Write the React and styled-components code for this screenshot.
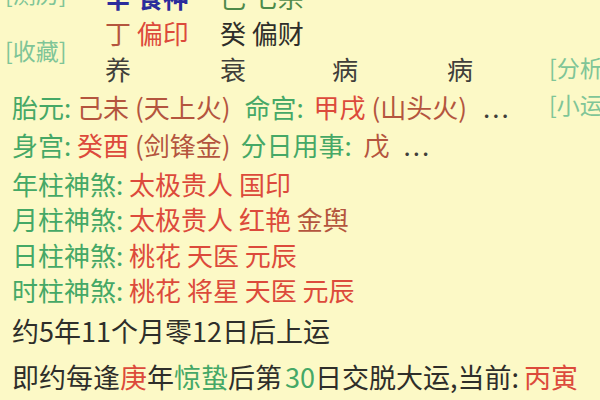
import React from "react";
import styled, { createGlobalStyle } from "styled-components";

const Global = createGlobalStyle`
  html, body { margin: 0; padding: 0; background: #fcf9c6; }
  body {
    width: 600px; height: 400px; overflow: hidden;
    font-family: "Noto Sans CJK SC", "Noto Sans", sans-serif;
  }
`;

const C = {
  green: "#45a866",
  light: "#7fc597",
  red: "#dc4a3b",
  brown: "#b4553e",
  dark: "#2e2e2a",
  grey: "#403f3a",
  blue: "#2b2c9c",
  olive: "#4e8a4a",
};

const Page = styled.div`
  position: relative;
  width: 600px;
  height: 400px;
  overflow: hidden;
  background: #fcf9c6;
  color: ${C.dark};
`;

const Top = styled.div`
  display: flex;
  margin-top: -21px;
`;

const SideLabels = styled.div`
  width: 105px;
  padding-left: 5px;
  box-sizing: border-box;
  display: flex;
  flex-direction: column;
  gap: 27px;
  margin-top: -1px;
`;

const Label = styled.div`
  font-size: 23px;
  line-height: 30px;
  color: ${C.light};
  white-space: nowrap;
`;

const Table = styled.div`
  display: grid;
  grid-template-columns: 115px 112px 115px 115px;
  grid-auto-rows: 36px;
  font-size: 26px;
  line-height: 36px;
  white-space: nowrap;
`;

const Cell = styled.div`
  color: ${(p) => p.$c || C.grey};
  font-weight: ${(p) => (p.$bold ? 700 : 400)};
`;

const Lines = styled.div`
  padding-left: 12px;
`;

const Line = styled.div`
  font-size: ${(p) => p.$size || 26}px;
  line-height: ${(p) => p.$lh || 36}px;
  margin-top: ${(p) => p.$gap || 0}px;
  white-space: nowrap;
  color: ${C.dark};
`;

const T = styled.span`
  color: ${(p) => p.$c || "inherit"};
  margin-left: ${(p) => p.$ml || 0}px;
`;

const More = styled.span`
  color: ${C.grey};
  letter-spacing: 2px;
  margin-left: ${(p) => p.$ml || 0}px;
`;

const Float = styled.div`
  position: absolute;
  left: 549px;
  top: 52px;
  display: flex;
  flex-direction: column;
  gap: 7px;
`;

export default function App() {
  return (
    <Page>
      <Global />
      <Top>
        <SideLabels>
          <Label>[测历]</Label>
          <Label>[收藏]</Label>
        </SideLabels>
        <Table>
          <Cell $c={C.blue} $bold>辛 食神</Cell>
          <Cell $c={C.olive}>己 七杀</Cell>
          <Cell />
          <Cell />
          <Cell>
            <T $c={C.brown}>丁</T> <T $c={C.red}>偏印</T>
          </Cell>
          <Cell $c={C.dark}>癸 偏财</Cell>
          <Cell />
          <Cell />
          <Cell>养</Cell>
          <Cell>衰</Cell>
          <Cell>病</Cell>
          <Cell>病</Cell>
        </Table>
      </Top>
      <Lines>
        <Line $gap={2}>
          <T $c={C.green}>胎元: </T>
          <T $c={C.brown}>己未 (天上火)</T>
          <T $c={C.green} $ml={14}>命宫: </T>
          <T $c={C.red} $ml={4}>甲戌</T> <T $c={C.brown}>(山头火)</T>
          <More $ml={16}>...</More>
        </Line>
        <Line $gap={2}>
          <T $c={C.green}>身宫: </T>
          <T $c={C.red}>癸酉</T> <T $c={C.brown}>(剑锋金)</T>
          <T $c={C.green} $ml={10}>分日用事: </T>
          <T $c={C.brown} $ml={6}>戊</T>
          <More $ml={14}>...</More>
        </Line>
        <Line $gap={3} $lh={35}>
          <T $c={C.green}>年柱神煞: </T>
          <T $c={C.red}>太极贵人 国印</T>
        </Line>
        <Line $lh={35.5}>
          <T $c={C.green}>月柱神煞: </T>
          <T $c={C.red}>太极贵人 红艳 </T>
          <T $c={C.brown}>金舆</T>
        </Line>
        <Line $lh={35.5}>
          <T $c={C.green}>日柱神煞: </T>
          <T $c={C.red}>桃花 天医 元辰</T>
        </Line>
        <Line $lh={35.5}>
          <T $c={C.green}>时柱神煞: </T>
          <T $c={C.red}>桃花 将星 天医 元辰</T>
        </Line>
        <Line $size={27} $gap={5}>约5年11个月零12日后上运</Line>
        <Line $size={27} $gap={10}>
          即约每逢<T $c={C.red}>庚</T>年<T $c={C.green}>惊蛰</T>后第
          <T $c={C.green} $ml={3}>30</T>日交脱大运,当前:
          <T $c={C.red} $ml={5}>丙寅</T>
        </Line>
      </Lines>
      <Float>
        <Label>[分析]</Label>
        <Label>[小运]</Label>
      </Float>
    </Page>
  );
}
